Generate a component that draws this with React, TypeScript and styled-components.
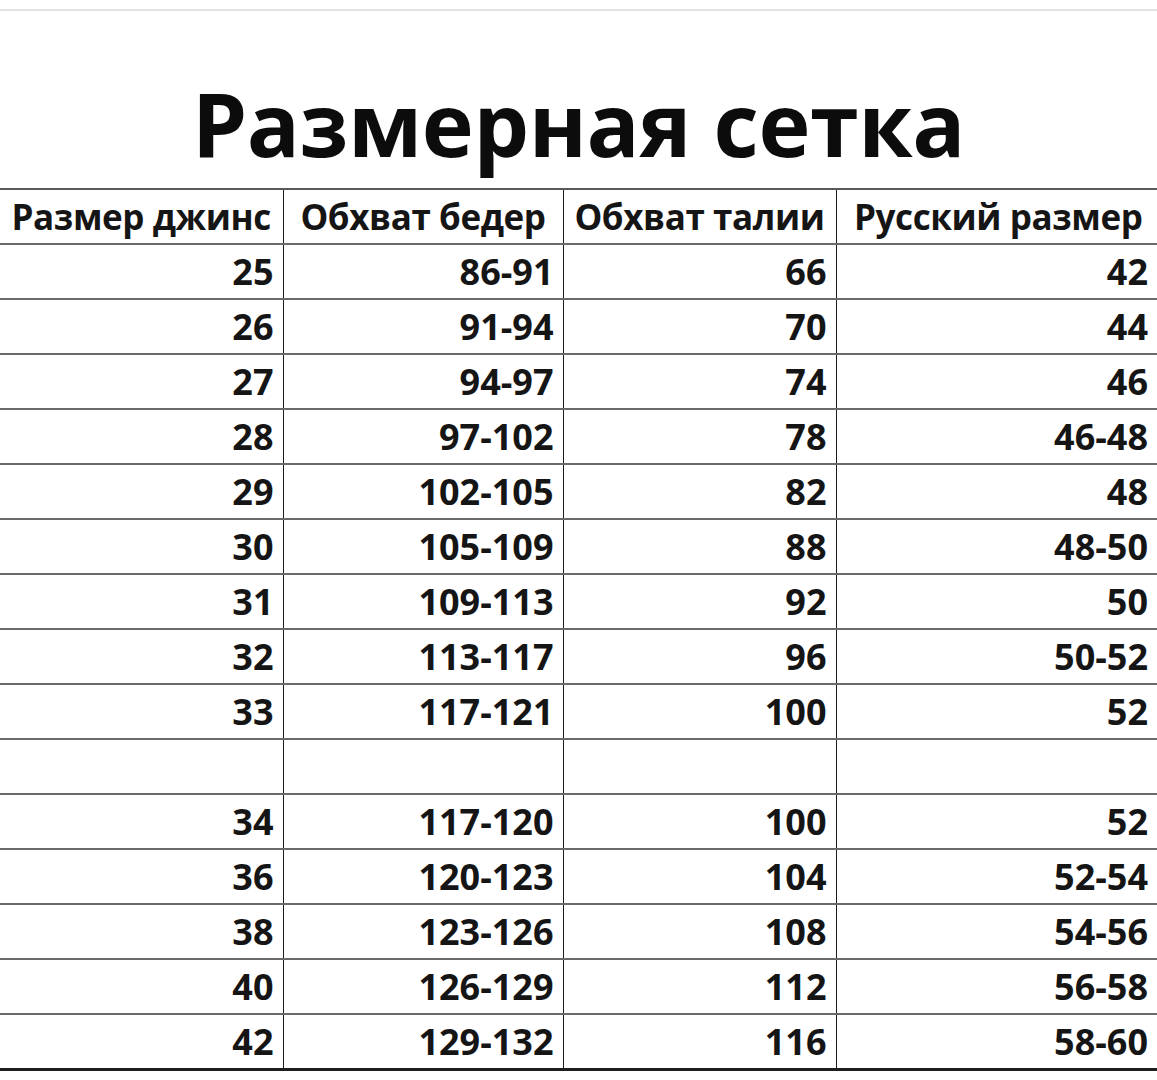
import styled, { createGlobalStyle } from "styled-components"

const GlobalStyle = createGlobalStyle`
    html, body {
        margin: 0;
        padding: 0;
        background: #fff;
    }
    body {
        font-family: "Open Sans", "Liberation Sans", sans-serif;
        color: #111;
    }
`

type SizeRow = [string, string, string, string] | null

const headers = ["Размер джинс", "Обхват бедер", "Обхват талии", "Русский размер"]

const rows: SizeRow[] = [
    ["25", "86-91", "66", "42"],
    ["26", "91-94", "70", "44"],
    ["27", "94-97", "74", "46"],
    ["28", "97-102", "78", "46-48"],
    ["29", "102-105", "82", "48"],
    ["30", "105-109", "88", "48-50"],
    ["31", "109-113", "92", "50"],
    ["32", "113-117", "96", "50-52"],
    ["33", "117-121", "100", "52"],
    null,
    ["34", "117-120", "100", "52"],
    ["36", "120-123", "104", "52-54"],
    ["38", "123-126", "108", "54-56"],
    ["40", "126-129", "112", "56-58"],
    ["42", "129-132", "116", "58-60"],
]

export default function App(){
    return(
        <Page>
            <GlobalStyle />
            <TopRule />
            <Title>Размерная сетка</Title>
            <Table>
                <colgroup>
                    <col style={{ width: 283 }} />
                    <col style={{ width: 280 }} />
                    <col style={{ width: 273 }} />
                    <col />
                </colgroup>
                <thead>
                    <tr>
                        {headers.map((h) => (
                            <HeadCell key={h}>{h}</HeadCell>
                        ))}
                    </tr>
                </thead>
                <tbody>
                    {rows.map((r, i) => (
                        <Row key={i} $last={i === rows.length - 1}>
                            {r
                                ? r.map((v, j) => <Cell key={j}>{v}</Cell>)
                                : [0, 1, 2, 3].map((j) => <Cell key={j} />)}
                        </Row>
                    ))}
                </tbody>
            </Table>
        </Page>
    )
}

const Page = styled.div`
    width: 1157px;
    height: 1080px;
    overflow: hidden;
    padding-top: 9px;
    box-sizing: border-box;
`
const TopRule = styled.div`
    height: 2px;
    background: #e2e2e2;
`
const Title = styled.h1`
    margin: 0;
    height: 177px;
    box-sizing: border-box;
    padding-top: 68px;
    text-align: center;
    font-size: 88px;
    line-height: 1;
    font-weight: 700;
    color: #0c0c0c;
    letter-spacing: -0.4px;
`
const Table = styled.table`
    width: 1160px;
    border-collapse: collapse;
    table-layout: fixed;
    border-top: 2px solid #5a5a5a;
`
const HeadCell = styled.th`
    height: 53px;
    padding: 0;
    text-align: center;
    font-size: 35px;
    font-weight: 700;
    letter-spacing: -0.4px;
    color: #151515;
    border-bottom: 2px solid #6a6a6a;
    border-right: 1px solid #1a1a1a;
    white-space: nowrap;
    &:last-child{
        border-right: none;
    }
`
const Row = styled.tr<{ $last: boolean }>`
    & > td{
        border-bottom: ${(p) => (p.$last ? "3px solid #1e1e1e" : "2px solid #6a6a6a")};
    }
`
const Cell = styled.td`
    height: 53px;
    padding: 0 9px 0 0;
    text-align: right;
    font-size: 36px;
    font-weight: 700;
    color: #151515;
    border-right: 1px solid #1a1a1a;
    &:last-child{
        border-right: none;
        padding-right: 12px;
    }
`
